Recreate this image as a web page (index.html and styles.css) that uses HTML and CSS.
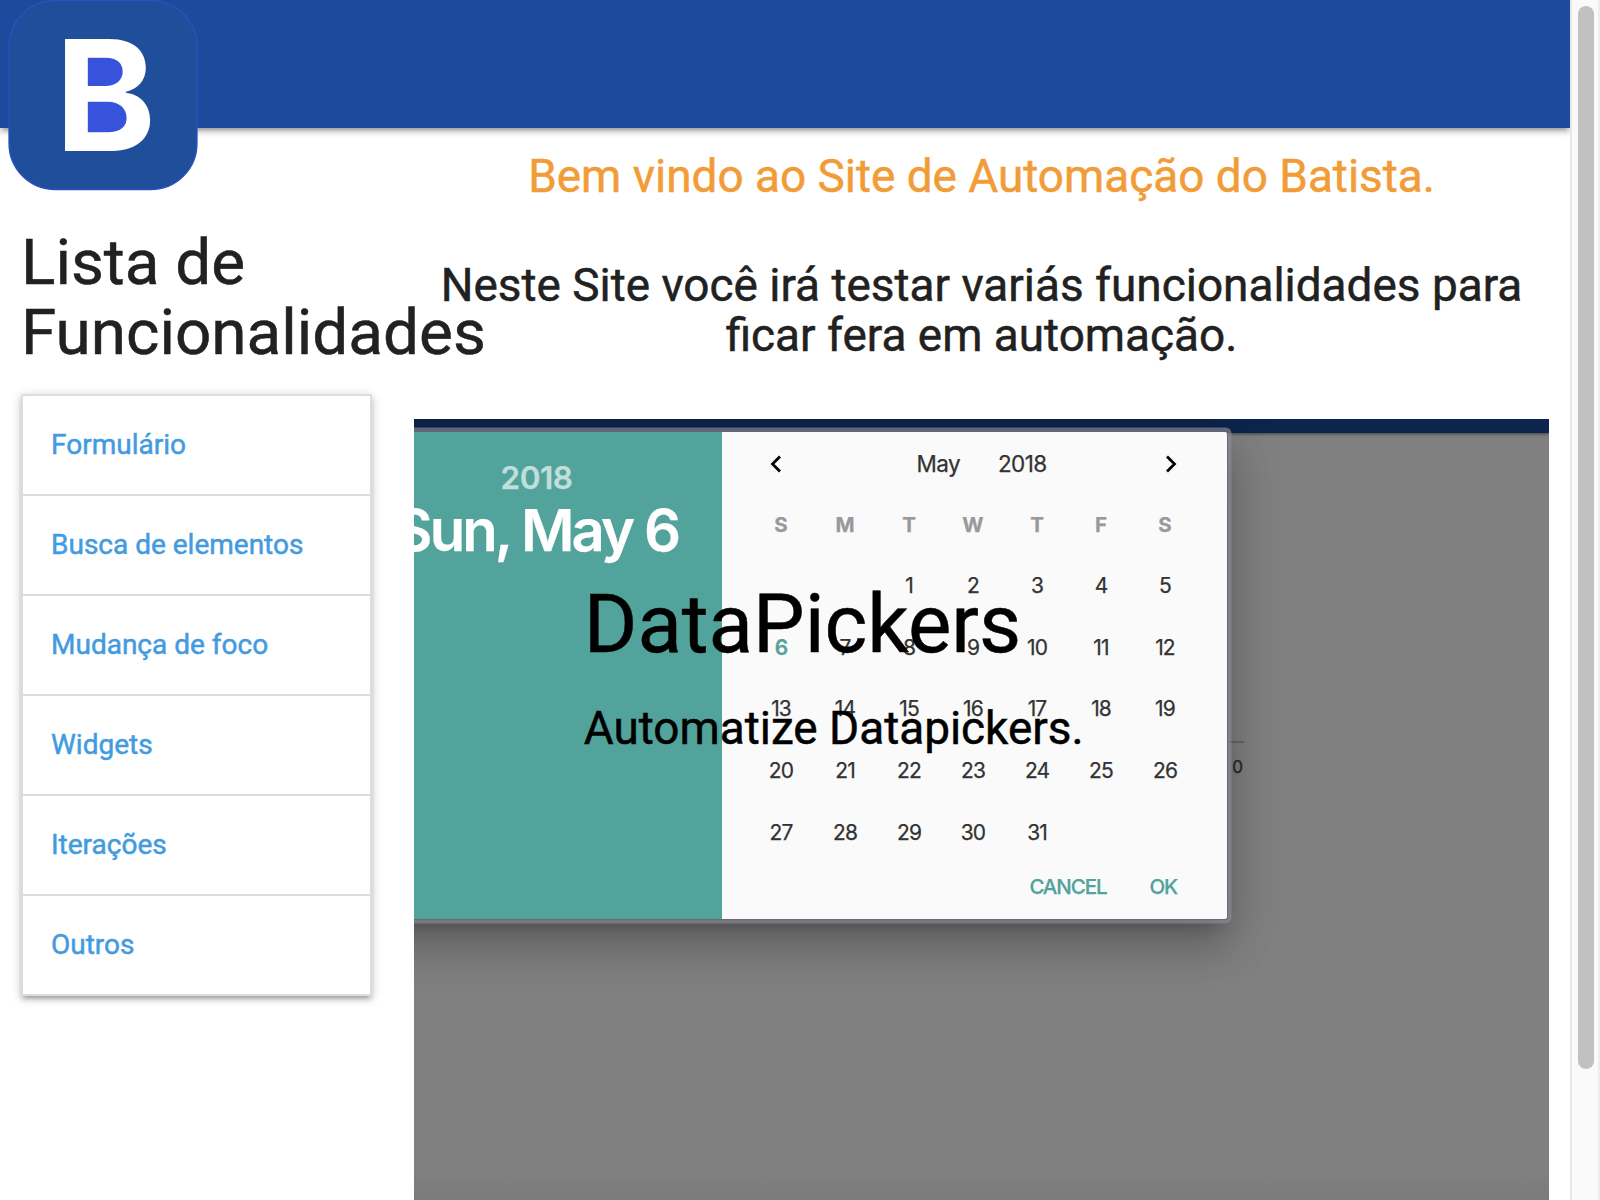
FILE: index.html
```html
<!DOCTYPE html>
<html lang="pt-BR">
<head>
<meta charset="utf-8">
<title>Automação com Batista</title>
<link rel="stylesheet" href="styles.css">
</head>
<body>
<div class="page">
  <header class="navbar">
    <a class="logo">
      <svg width="190" height="190" viewBox="0 0 190 190">
        <rect class="logo-tile" x="1" y="0.5" width="188" height="189" rx="46"/>
        <rect class="logo-inner" x="74" y="54" width="46" height="80"/>
        <text class="logo-letter" x="47" y="150.500" textLength="101" lengthAdjust="spacingAndGlyphs">B</text>
      </svg>
    </a>
  </header>
  <div class="row">
    <aside class="sidebar">
      <h4>Lista de Funcionalidades</h4>
      <ul class="collection">
        <li><a>Formulário</a></li>
        <li><a>Busca de elementos</a></li>
        <li><a>Mudança de foco</a></li>
        <li><a>Widgets</a></li>
        <li><a>Iterações</a></li>
        <li><a>Outros</a></li>
      </ul>
    </aside>
    <main class="content">
      <h5 class="welcome">Bem vindo ao Site de Automação do Batista.</h5>
      <h5 class="intro">Neste Site você irá testar variás funcionalidades para ficar fera em automação.</h5>
      <section class="slider">
        <div class="slide-bar"></div>
        <div class="behind"><span>0</span></div>
        <div class="picker">
          <div class="date-display">
            <span class="year">2018</span>
            <span class="date">Sun, May 6</span>
          </div>
          <div class="calendar">
            <div class="controls">
              <svg width="14" height="20" viewBox="0 0 14 20"><path d="M11 2.5 3.5 10l7.500 7.500"/></svg>
              <div class="selects"><span>May</span><span>2018</span></div>
              <svg width="14" height="20" viewBox="0 0 14 20"><path d="M3 2.500 10.500 10 3 17.500"/></svg>
            </div>
            <div class="days">
              <b>S</b><b>M</b><b>T</b><b>W</b><b>T</b><b>F</b><b>S</b>
              <i></i><i></i><i>1</i><i>2</i><i>3</i><i>4</i><i>5</i>
              <i class="today">6</i><i>7</i><i>8</i><i>9</i><i>10</i><i>11</i><i>12</i>
              <i>13</i><i>14</i><i>15</i><i>16</i><i>17</i><i>18</i><i>19</i>
              <i>20</i><i>21</i><i>22</i><i>23</i><i>24</i><i>25</i><i>26</i>
              <i>27</i><i>28</i><i>29</i><i>30</i><i>31</i>
            </div>
            <div class="actions"><span>CANCEL</span><span>OK</span></div>
          </div>
        </div>
        <div class="caption">
          <h3>DataPickers</h3>
          <h5>Automatize Datapickers.</h5>
        </div>
      </section>
    </main>
  </div>
</div>
<div class="scrollbar"><div class="thumb"></div></div>
</body>
</html>
```
FILE: styles.css
```css
* { box-sizing: border-box; }
html { font-size: 28px; }
body {
  margin: 0;
  height: 1200px;
  overflow: hidden;
  display: flex;
  background: #fff;
  color: #212121;
  font-family: Roboto, sans-serif;
  -webkit-text-stroke: .5px currentColor;
}
h3, h4, h5 { margin: 0; font-weight: 400; line-height: 110%; }
h3 { font-size: 2.92rem; }
h4 { font-size: 2.28rem; }
h5 { font-size: 1.64rem; }

.page { width: 1570px; height: 1200px; overflow: hidden; }
.navbar {
  position: relative;
  z-index: 1;
  height: 128px;
  padding-left: 8px;
  background: #1c4a9d;
  box-shadow: 0 4px 4px 0 rgba(0,0,0,.14), 0 6px 2px -4px rgba(0,0,0,.12), 0 2px 10px 0 rgba(0,0,0,.2);
}
.logo, .logo svg { display: block; }
.logo svg { overflow: visible; }
.logo-tile { fill: #1f4e9b; stroke: #2d50c0; stroke-width: 1.3; }
.logo-inner { fill: #3753db; }
.logo-letter { fill: #fff; font: 700 154px Inter, sans-serif; -webkit-text-stroke: 0; }

.row { display: flex; height: 1072px; }
.sidebar { width: 392.5px; padding: 100px 21px 0; }
.collection {
  list-style: none;
  margin: 25.5px 0 0;
  padding: 0;
  width: 351px;
  border: 2px solid #ddd;
  box-shadow: 0 4px 4px 0 rgba(0,0,0,.14), 0 6px 2px -4px rgba(0,0,0,.12), 0 2px 10px 0 rgba(0,0,0,.2);
}
.collection li {
  height: 100px;
  padding: 0 28px;
  border-bottom: 2px solid #ddd;
  line-height: 98px;
  font-size: 28px;
  color: #439bdf;
}
.collection li:last-child { height: 98px; border-bottom: 0; }

.content {
  width: 1177.5px;
  padding: 23px 21px 0 21.5px;
  display: flex;
  flex-direction: column;
  text-align: center;
}
.welcome { color: #f29c38; }
.intro { margin-top: 58px; }
.slider {
  position: relative;
  flex: 1;
  margin-top: 58px;
  overflow: hidden;
  background: linear-gradient(#808080 753px, #7a7a7a 781px);
  text-align: left;
}
.slide-bar { height: 14px; background: #0d244d; box-shadow: 0 1px 3px rgba(0,0,0,.5); }
.behind {
  position: absolute;
  left: 700px;
  top: 322px;
  width: 130px;
  padding: 12px 1px 0 0;
  border-top: 2px solid #666;
  text-align: right;
  font: 17px/24px Inter, sans-serif;
  color: #2d2d2d;
}
.picker {
  position: absolute;
  left: -63px;
  top: 13px;
  width: 876px;
  height: 487px;
  display: flex;
  border-radius: 2px;
  background: #fafafa;
  font-family: Inter, sans-serif;
  -webkit-text-stroke: .25px currentColor;
  box-shadow: 0 0 0 1px rgba(98,102,116,.8), 0 0 0 4.5px rgba(142,142,148,.65), 0 28px 44px 3px rgba(0,0,0,.17), 0 10px 52px 8px rgba(0,0,0,.13), 0 13px 17px -8px rgba(0,0,0,.24);
}
.date-display {
  width: 371px;
  background: #52a39b;
  display: flex;
  flex-direction: column;
  align-items: center;
  padding-top: 26px;
  font-weight: 600;
  white-space: nowrap;
}
.year { font-size: 31.5px; line-height: 40px; letter-spacing: -.5px; color: #c0dfdc; }
.date { font-size: 58px; line-height: 64px; letter-spacing: -2.9px; color: #fff; }
.calendar { flex: 1; padding: 20px 28px 0 27px; }
.controls { display: flex; justify-content: space-between; align-items: center; height: 24px; padding: 0 21px 0 20px; }
.controls path { fill: none; stroke: #000; stroke-width: 2.8; }
.selects { display: flex; gap: 38px; padding-left: 16px; font-size: 22.500px; line-height: 24px; letter-spacing: -.6px; color: #333; }
.days {
  display: grid;
  grid-template-columns: repeat(7, 64px);
  grid-template-rows: 60px 61.7px 61.7px 61.7px 61.7px 61.7px;
  align-items: center;
  margin-top: 19px;
  text-align: center;
  font-size: 21px;
  letter-spacing: -.9px;
  color: #333;
}
.days i { font-style: normal; }
.days b { color: #999; font-weight: 700; font-size: 20.500px; letter-spacing: 0; }
.days .today { color: #52a39b; font-weight: 600; }
.actions {
  display: flex;
  justify-content: flex-end;
  gap: 43px;
  padding-right: 22px;
  margin-top: 9px;
  font-size: 20.500px;
  line-height: 30px;
  font-weight: 500;
  letter-spacing: -1.1px;
  color: #52a39b;
}
.caption { position: absolute; left: 15%; top: 161px; width: 70%; margin-left: -.5px; color: #000; }
.caption h5 { margin-top: 34px; }

.scrollbar {
  width: 30px;
  height: 1200px;
  padding: 6px 4px 0 6px;
  border-left: 2px solid #e8e8e8;
  border-right: 2px solid #ededed;
  background: #fafafa;
}
.thumb { width: 16px; height: 1063px; border-radius: 8px; background: #c1c1c1; }
```
